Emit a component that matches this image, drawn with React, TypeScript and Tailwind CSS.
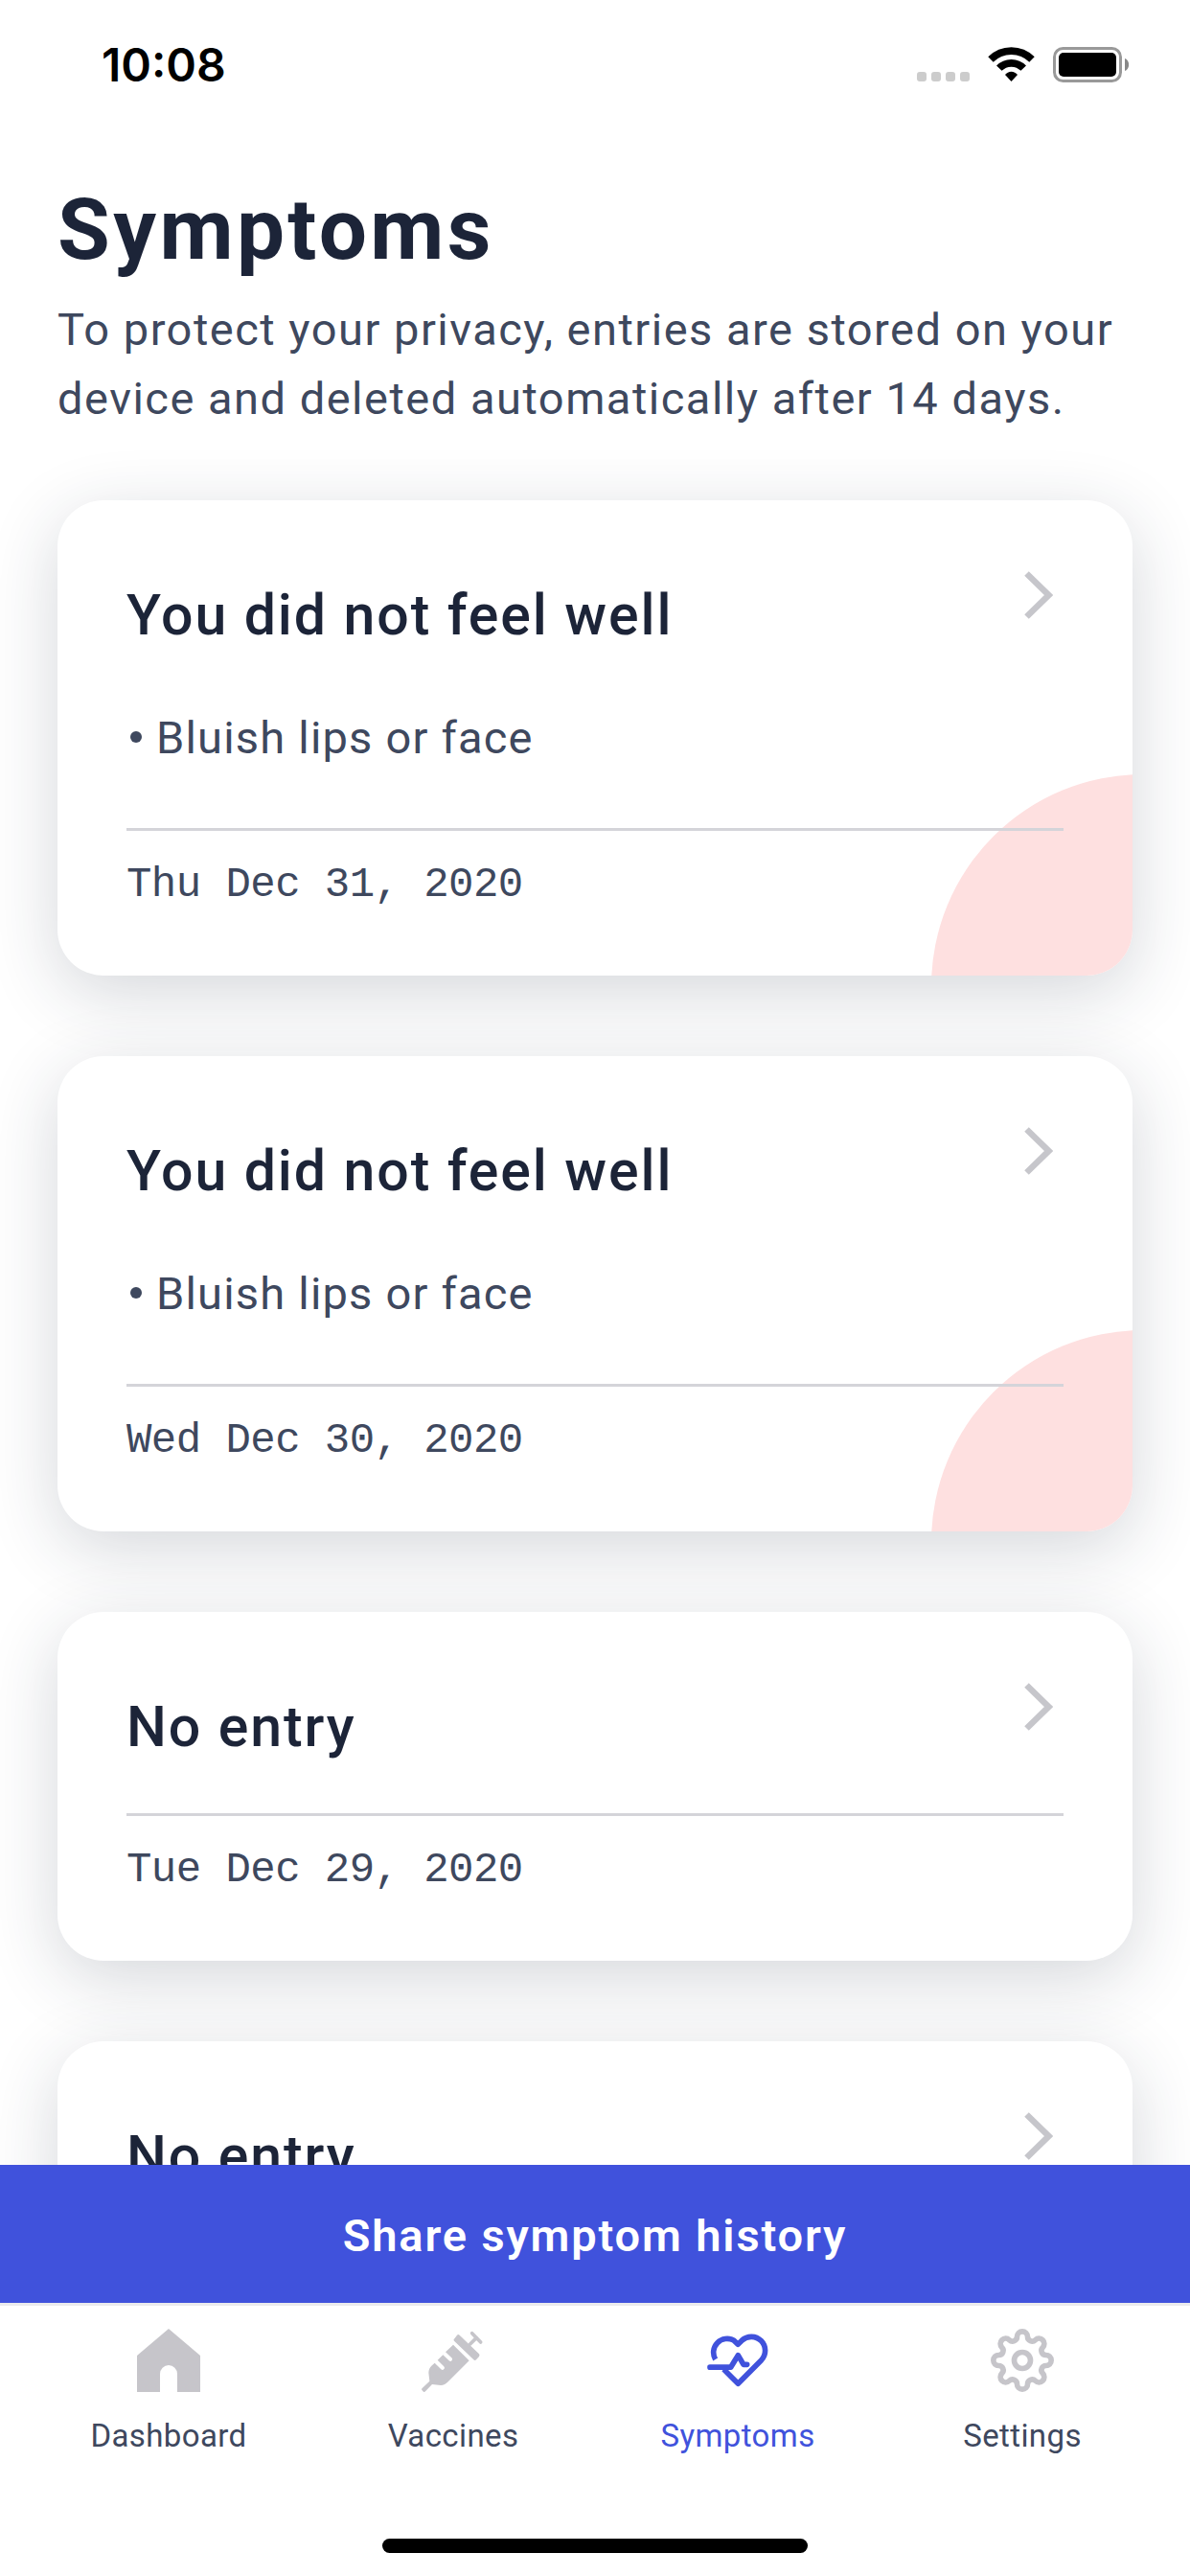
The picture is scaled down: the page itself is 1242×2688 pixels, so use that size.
import React from "react";

function Chevron() {
  return (
    <svg className="h-[50px] w-[30px]" viewBox="0 0 30 50" fill="none">
      <path d="M2.5 2.5 25.5 25 2.5 47.5" stroke="#c6c6cb" strokeWidth="6.5" />
    </svg>
  );
}

type Entry = { title: string; symptom?: string; date: string };

const entries: Entry[] = [
  { title: "You did not feel well", symptom: "Bluish lips or face", date: "Thu Dec 31, 2020" },
  { title: "You did not feel well", symptom: "Bluish lips or face", date: "Wed Dec 30, 2020" },
  { title: "No entry", date: "Tue Dec 29, 2020" },
  { title: "No entry", date: "Mon Dec 28, 2020" },
];

function Card({ entry }: { entry: Entry }) {
  return (
    <article className="relative flex shrink-0 flex-col rounded-[48px] bg-white px-[72px] pb-[65px] shadow-[0_18px_72px_rgba(30,41,66,0.19)]">
      {entry.symptom && (
        <div className="absolute inset-0 overflow-hidden rounded-[48px]">
          <div className="absolute left-[912px] top-[286px] h-[442px] w-[442px] rounded-full bg-[#fee0e0]" />
        </div>
      )}
      <div className="relative flex h-[156px] items-start justify-between pr-[11px]">
        <h2 className="mt-[84px] whitespace-nowrap text-[59px] font-medium leading-[72px] tracking-[1.9px] text-[#1c2438]">
          {entry.title}
        </h2>
        <div className="mt-[74px]">
          <Chevron />
        </div>
      </div>
      {entry.symptom && (
        <div className="relative mt-[56px] mb-[4px] flex h-[72px] items-center whitespace-nowrap text-[47px] leading-[72px] tracking-[1.2px] text-[#3e485e]">
          <span className="ml-[4px] mr-[15px] mt-[-2px] h-3 w-3 rounded-full bg-[#3e485e]" />
          {entry.symptom}
        </div>
      )}
      <div className="relative mt-[54px] h-[3px] bg-[#d4d4d9]" />
      <p className="relative mt-[26px] h-[60px] whitespace-nowrap font-['Liberation_Mono',monospace] text-[44px] leading-[60px] tracking-[-0.55px] text-[#3e485e]">
        {entry.date}
      </p>
    </article>
  );
}

function StatusBar() {
  return (
    <div className="flex h-[132px] items-start justify-between pl-[106px] pr-[64px]">
      <div className="mt-[38px] font-['Inter',sans-serif] text-[48px] font-semibold leading-[60px] text-black">10:08</div>
      <svg className="mt-[46px] h-[44px] w-[224px]" viewBox="954 46 224 44">
        <g fill="#cccccc">
          <rect x="957" y="75" width="10" height="10" rx="3" />
          <rect x="972" y="75" width="10" height="10" rx="3" />
          <rect x="987" y="75" width="10" height="10" rx="3" />
          <rect x="1002" y="75" width="10" height="10" rx="3" />
        </g>
        <path d="M1055.5 85 1049 78a8.200 8.200 0 0 1 13 0Z" fill="#000" />
        <g fill="none" stroke="#000" strokeWidth="7.7">
          <path d="M1034 62a30.400 30.400 0 0 1 43 0" />
          <path d="M1042.800 71.200a17.600 17.600 0 0 1 25.400 0" />
        </g>
        <rect x="1100.500" y="50.500" width="69" height="34" rx="9" fill="none" stroke="#999" strokeWidth="3" />
        <rect x="1105" y="55" width="60" height="25" rx="5" fill="#000" />
        <path d="M1174 61c5.500 2 5.500 11 0 13Z" fill="#888" />
      </svg>
    </div>
  );
}

function HomeIcon() {
  return (
    <svg className="h-[66px] w-[66px]" viewBox="0 0 66 66" fill="#c6c5ca">
      <path d="M0 28 33 0 66 28V66H42V47a9 9 0 0 0-18 0V66H0Z" />
    </svg>
  );
}

function SyringeIcon() {
  return (
    <svg className="h-[66px] w-[66px]" viewBox="930 30 198 198" fill="#c6c5ca">
      <path d="M1029 80 1079 130 1013 196Q1003 207 990 207L963 204 942 226Q939 229 936 227L931 222Q929 219 932 216L955 194 952 168Q952 154 961 146L971 137 991 157Q996 161 1000 156 1004 152 999 147L980 128 997 112 1016 130Q1021 134 1025 129 1028 125 1024 121L1005 103Z" />
      <path d="M1033 61 1041 50Q1045 46 1049 50L1110 109Q1113 113 1110 117L1101 127Q1097 131 1093 127L1032 68Q1028 65 1033 61Z" />
      <path d="M1088 44 1115 72M1102 58 1082 78" fill="none" stroke="#c6c5ca" strokeWidth="11" strokeLinecap="round" />
    </svg>
  );
}

function HeartIcon() {
  return (
    <svg className="h-[66px] w-[66px]" viewBox="51 30 198 198" fill="none" stroke="#4052dc" strokeWidth="17" strokeLinejoin="round">
      <path d="M80 126A43 43 0 0 1 138 66.600L150.500 79 163 66.600A43.300 43.300 0 0 1 224 128L151 202 106 157" />
      <path d="M63 150.500H128L151 113 168 142H179" strokeLinecap="round" />
    </svg>
  );
}

// Cog outline: eight rounded teeth joined by rounded valleys.
const gearOutline = (() => {
  const at = (x: number, y: number, turn: number) => {
    const a = (turn * Math.PI) / 4;
    const px = x * Math.cos(a) - y * Math.sin(a);
    const py = x * Math.sin(a) + y * Math.cos(a);
    return `${px.toFixed(2)} ${py.toFixed(2)}`;
  };
  let d = `M${at(-16.5, -74, 0)}`;
  for (let i = 0; i < 8; i++) {
    d += `A16.5 16.5 0 0 1 ${at(16.5, -74, i)}A14.1 14.1 0 0 0 ${at(-16.5, -74, i + 1)}`;
  }
  return d + "Z";
})();

function GearIcon() {
  return (
    <svg className="h-[66px] w-[66px]" viewBox="-99 -99 198 198" fill="none" stroke="#c6c5ca" strokeWidth="17">
      <path d={gearOutline} />
      <circle r="25.500" />
    </svg>
  );
}

const tabs = [
  { label: "Dashboard", icon: <HomeIcon />, color: "text-[#3e485e]" },
  { label: "Vaccines", icon: <SyringeIcon />, color: "text-[#3e485e]" },
  { label: "Symptoms", icon: <HeartIcon />, color: "text-[#4052dc]" },
  { label: "Settings", icon: <GearIcon />, color: "text-[#3e485e]" },
];

export default function App() {
  return (
    <div className="flex h-[2688px] w-[1242px] flex-col overflow-hidden bg-white font-['Roboto',sans-serif]">
      <StatusBar />
      <main className="flex min-h-0 flex-1 flex-col overflow-hidden px-[60px] pt-[48px]">
        <h1 className="h-[120px] text-[89px] font-bold leading-[120px] tracking-[3.4px] text-[#1c2438]">Symptoms</h1>
        <p className="mt-[8px] h-[144px] whitespace-nowrap text-[47px] leading-[72px] tracking-[1.5px] text-[#3e485e]">
          To protect your privacy, entries are stored on your
          <br />
          device and deleted automatically after 14 days.
        </p>
        <section className="mt-[70px] flex flex-col gap-[84px]">
          {entries.map((e) => (
            <Card key={e.date} entry={e} />
          ))}
        </section>
      </main>
      <button className="relative h-[144px] shrink-0 bg-[#4052dc] pt-[4px] text-center text-[47px] font-semibold leading-[140px] tracking-[1.85px] text-white">
        Share symptom history
      </button>
      <nav className="relative flex h-[285px] shrink-0 flex-col justify-between border-t-[3px] border-[#ebebed] bg-white pb-[24px]">
        <div className="grid grid-cols-4 pl-[27.5px] pr-[26.5px] pt-[24px]">
          {tabs.map((t) => (
            <div key={t.label} className="flex flex-col items-center">
              {t.icon}
              <span className={`mt-[26px] text-[33px] leading-[40px] tracking-[0.4px] ${t.color}`}>{t.label}</span>
            </div>
          ))}
        </div>
        <div className="h-[15px] w-[444px] self-center rounded-full bg-black" />
      </nav>
    </div>
  );
}
